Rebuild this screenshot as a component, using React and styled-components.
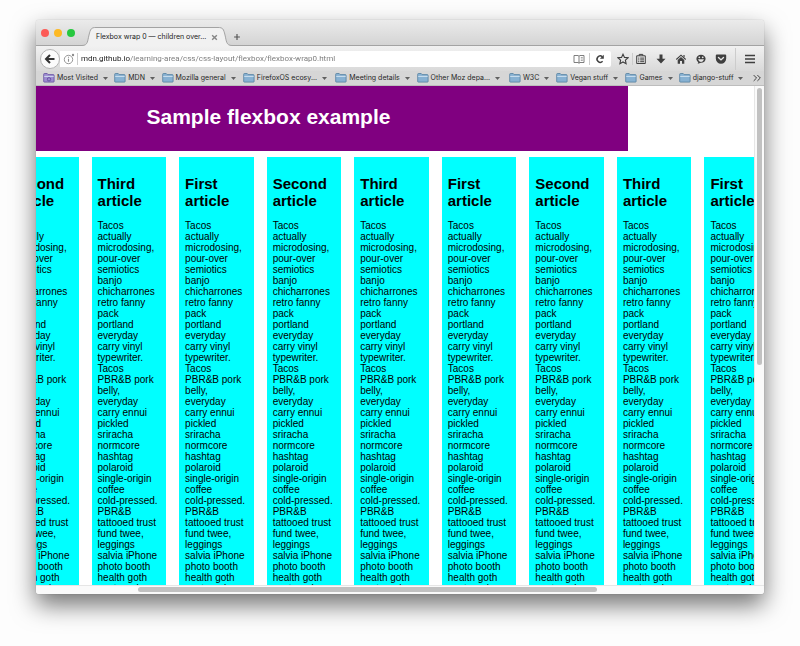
import React from "react";
import styled, { createGlobalStyle } from "styled-components";

const GlobalStyle = createGlobalStyle`
  * { box-sizing: border-box; }
  body { margin: 0; background: #fdfdfd; }
  button, input { font: inherit; color: inherit; }
`;

const UI_FONT = `Inter, Roboto, sans-serif`;
const ADDRESS_FONT = `Roboto, Inter, sans-serif`;
const PAGE_FONT = `"Liberation Sans", Arial, Helvetica, sans-serif`;

const Desktop = styled.div`
  height: 100vh;
  min-height: 320px;
  padding: 20px 36px 52px;
  display: flex;
  overflow: hidden;
`;

const BrowserWindow = styled.div`
  flex: 1;
  min-width: 0;
  display: flex;
  flex-direction: column;
  overflow: hidden;
  border-radius: 3px;
  background: #ffffff;
  font-family: ${UI_FONT};
  box-shadow: 0 0 1px rgba(0, 0, 0, 0.35), 0 11px 24px rgba(0, 0, 0, 0.55);
`;

const TitleBar = styled.div`
  height: 26px;
  flex: none;
  display: flex;
  align-items: flex-end;
  padding-left: 5px;
  background: linear-gradient(#ebebeb, #d3d3d3);
  box-shadow: inset 0 -1px 0 #a3a3a3;
`;

const WindowButtons = styled.div`
  display: flex;
  gap: 5px;
  align-self: center;
  margin-right: 7px;
`;

const WindowButton = styled.button`
  width: 8px;
  height: 8px;
  padding: 0;
  border: 0;
  border-radius: 50%;
  background: ${(p) => p.$color};
`;

const Tab = styled.div`
  height: 19px;
  display: flex;
  align-items: stretch;
`;

const TabEdge = styled.svg`
  display: block;
  width: 14px;
  height: 19px;
`;

const TabBody = styled.div`
  width: 122px;
  display: flex;
  align-items: center;
  justify-content: space-between;
  border-top: 1px solid #a3a3a3;
  background: #f1f1f1;
`;

const TabTitle = styled.span`
  font-size: 7px;
  line-height: 10px;
  white-space: nowrap;
  color: #222222;
`;

const IconButton = styled.button`
  flex: none;
  width: ${(p) => p.$w || 12}px;
  height: 12px;
  padding: 0;
  border: 0;
  background: none;
  display: flex;
  align-items: center;
  justify-content: center;
  color: ${(p) => p.$color || "#3f3f3f"};
`;

const NewTab = styled(IconButton)`
  margin-bottom: 3px;
`;

const Toolbar = styled.div`
  height: 25px;
  flex: none;
  display: flex;
  align-items: center;
  padding: 0 8px 0 4px;
  background: linear-gradient(#f1f1f1, #d9d9d9);
`;

const BackButton = styled.button`
  flex: none;
  width: 20px;
  height: 20px;
  padding: 0;
  border: 1px solid #b4b4b4;
  border-radius: 50%;
  background: #fbfbfb;
  color: #333333;
  display: flex;
  align-items: center;
  justify-content: center;
`;

const AddressBar = styled.div`
  flex: 1;
  min-width: 0;
  height: 16px;
  display: flex;
  align-items: center;
  background: #ffffff;
  border-radius: 0 2px 2px 0;
  padding: 0 5px 0 3px;
`;

const Separator = styled.span`
  flex: none;
  width: 1px;
  height: ${(p) => p.$h || 12}px;
  margin: 0 ${(p) => p.$gap || 2}px;
  background: #cccccc;
`;

const AddressInput = styled.input`
  flex: 1;
  min-width: 0;
  height: 14px;
  padding: 0 0 0 1px;
  border: 0;
  outline: 0;
  font-family: ${ADDRESS_FONT};
  font-size: 8px;
  color: #777777;
  background: linear-gradient(90deg, #1c1c1c 50px, #777777 50px);
  background-clip: text;
  -webkit-text-fill-color: transparent;
`;

const Tools = styled.div`
  flex: none;
  display: flex;
  align-items: center;
  padding-left: 5px;
`;

const ToolGroup = styled.div`
  display: flex;
  align-items: center;
  gap: 8px;
`;

const Bookmarks = styled.nav`
  height: 15px;
  flex: none;
  display: flex;
  align-items: center;
  padding: 0 2px 0 7px;
  background: #d6d6d6;
  border-bottom: 1px solid #bdbdbd;
`;

const Bookmark = styled.button`
  flex: ${(p) => p.$span} 1 0;
  min-width: 0;
  padding: 0;
  border: 0;
  background: none;
  display: flex;
  align-items: center;
  gap: 2px;
  font-size: 7px;
  line-height: 10px;
  white-space: nowrap;
  color: #262626;
`;

const FolderIcon = styled.svg`
  flex: none;
  width: 12px;
  height: 10px;
`;

const Caret = styled.svg`
  flex: none;
  width: 5px;
  height: 3px;
  margin-left: 3px;
  fill: #5f5f5f;
`;

const Content = styled.div`
  flex: 1;
  min-height: 0;
  display: grid;
  grid-template-columns: minmax(0, 1fr) 10px;
  grid-template-rows: minmax(0, 1fr) 9px;
`;

const Viewport = styled.main`
  overflow: hidden;
  background: #ffffff;
  font-family: ${PAGE_FONT};
  color: #000000;
`;

const PageHeader = styled.header`
  margin: 0 126px 0 -127px;
  padding: 18px 0 21px;
  background: #800080;
  text-align: center;
`;

const PageTitle = styled.h1`
  margin: 0;
  font-size: 21px;
  line-height: 26px;
  color: #ffffff;
`;

const Articles = styled.section`
  margin: 6px -25px 0 -32px;
  display: grid;
  grid-template-columns: repeat(9, minmax(0, 1fr));
  gap: 13px;
`;

const Article = styled.article`
  padding: 18px 0 20px 6px;
  background: #00ffff;
`;

const ArticleTitle = styled.h2`
  margin: 0 0 11px;
  font-size: 15px;
  line-height: 17px;
`;

const ArticleText = styled.p`
  margin: 0;
  font-size: 10px;
  line-height: 11px;
  white-space: pre;
`;

const VerticalBar = styled.div`
  padding: 2px 2px;
  border-left: 1px solid #e6e6e6;
  background: #fafafa;
`;

const HorizontalBar = styled.div`
  grid-column: 1 / -1;
  padding: 1px 0 2px;
  border-top: 1px solid #e6e6e6;
  background: #fafafa;
`;

const VerticalThumb = styled.div`
  width: 5px;
  height: 56%;
  border-radius: 3px;
  background: #c1c1c1;
`;

const HorizontalThumb = styled.div`
  width: 63%;
  height: 5px;
  margin-left: 14%;
  border-radius: 3px;
  background: #c1c1c1;
`;

const Glyph = ({ w = 12, h = 12, children }) => (
  <svg width={w} height={h} viewBox="0 0 12 12" fill="none" stroke="currentColor" strokeWidth="1.2" aria-hidden="true">
    {children}
  </svg>
);

const Folder = ({ special }) => {
  const fill = special ? "#9d8bd0" : "#87b1d2";
  const line = special ? "#6551a0" : "#54809f";
  return (
    <FolderIcon viewBox="0 0 12 10" aria-hidden="true">
      <path d="M.7 8.5V1.300q0-.8.800-.8h2.700l1 1.100h5.100q.8 0 .8.800v6.100q0 .6-.6.600h-9.200q-.6 0-.6-.6z" fill={fill} stroke={line} strokeWidth=".8" />
      <path d="M1.200 3.400h9.500" stroke="#d7e6f2" strokeWidth=".9" />
      {special && <circle cx="6" cy="6.300" r="1.700" fill="none" stroke="#5b4896" strokeWidth=".8" />}
    </FolderIcon>
  );
};

const bookmarks = [
  { label: "Most Visited", span: 71, special: true },
  { label: "MDN", span: 47 },
  { label: "Mozilla general", span: 81 },
  { label: "FirefoxOS ecosy...", span: 92 },
  { label: "Meeting details", span: 81 },
  { label: "Other Moz depa...", span: 92 },
  { label: "W3C", span: 47 },
  { label: "Vegan stuff", span: 69 },
  { label: "Games", span: 53 },
  { label: "django-stuff", span: 73 },
];

const articleTitles = ["Second", "Third", "First", "Second", "Third", "First", "Second", "Third", "First"];

const articleText = `Tacos
actually
microdosing,
pour-over
semiotics
banjo
chicharrones
retro fanny
pack
portland
everyday
carry vinyl
typewriter.
Tacos
PBR&B pork
belly,
everyday
carry ennui
pickled
sriracha
normcore
hashtag
polaroid
single-origin
coffee
cold-pressed.
PBR&B
tattooed trust
fund twee,
leggings
salvia iPhone
photo booth
health goth
gastropub
hammock.`;

export default function App() {
  return (
    <>
      <GlobalStyle />
      <Desktop>
        <BrowserWindow>
          <TitleBar>
            <WindowButtons>
              <WindowButton $color="#fc5b57" aria-label="Close window" />
              <WindowButton $color="#fdb924" aria-label="Minimize window" />
              <WindowButton $color="#27c83f" aria-label="Zoom window" />
            </WindowButtons>
            <Tab>
              <TabEdge viewBox="0 0 14 19" aria-hidden="true">
                <path d="M0 18.5C6 18.5 5.5 14 7 8S9 .5 14 .5V19H0z" fill="#f1f1f1" />
                <path d="M0 18.5C6 18.5 5.5 14 7 8S9 .5 14 .5" fill="none" stroke="#a3a3a3" />
              </TabEdge>
              <TabBody>
                <TabTitle>Flexbox wrap 0 — children over...</TabTitle>
                <IconButton $w={7} $color="#858585" aria-label="Close tab">
                  <Glyph w={7} h={7}><path d="M2 2l8 8M10 2l-8 8" strokeWidth="2.4" /></Glyph>
                </IconButton>
              </TabBody>
              <TabEdge viewBox="0 0 14 19" aria-hidden="true">
                <path d="M14 18.5C8 18.5 8.5 14 7 8S5 .5 0 .5V19H14z" fill="#f1f1f1" />
                <path d="M14 18.5C8 18.5 8.5 14 7 8S5 .5 0 .5" fill="none" stroke="#a3a3a3" />
              </TabEdge>
            </Tab>
            <NewTab aria-label="New tab" $w={10} $color="#555555">
              <Glyph><path d="M6 2.5v7M2.5 6h7" strokeWidth="1.4" /></Glyph>
            </NewTab>
          </TitleBar>

          <Toolbar>
            <BackButton aria-label="Back">
              <Glyph><path d="M10.5 6H2.5M6 2L2 6l4 4" strokeWidth="2" /></Glyph>
            </BackButton>
            <AddressBar>
              <IconButton $color="#8d8d8d" aria-label="Site information">
                <Glyph>
                  <circle cx="5.5" cy="6.5" r="4.2" strokeWidth=".9" />
                  <path d="M5.5 5.8v3M5.5 3.7v1" strokeWidth="1.1" />
                  <circle cx="10" cy="2" r="1.2" fill="currentColor" stroke="none" />
                </Glyph>
              </IconButton>
              <Separator />
              <AddressInput
                aria-label="Address"
                defaultValue="mdn.github.io/learning-area/css/css-layout/flexbox/flexbox-wrap0.html"
                spellCheck={false}
              />
              <IconButton $color="#707070" aria-label="Reader view">
                <Glyph>
                  <path d="M6 3.2L5 2.5H1v7h4l1 .7 1-.7h4v-7H7zM6 3.2v7" strokeWidth=".9" />
                  <path d="M7.8 4.5h2M7.8 6h2M7.8 7.5h2" strokeWidth=".6" />
                </Glyph>
              </IconButton>
              <Separator $gap={4} />
              <IconButton aria-label="Reload">
                <Glyph>
                  <path d="M8.6 8.3A3.2 3.2 0 1 1 8.3 3.6" strokeWidth="1.5" />
                  <path d="M9.8 1.8v4H5.9z" fill="currentColor" stroke="none" />
                </Glyph>
              </IconButton>
            </AddressBar>
            <Tools>
              <IconButton $w={14} aria-label="Bookmark this page">
                <Glyph><path d="M6 1.2l1.5 3.2 3.5.4-2.6 2.4.7 3.5L6 9 2.9 10.7l.7-3.5L1 4.8l3.5-.4z" strokeWidth="1.1" /></Glyph>
              </IconButton>
              <Separator />
              <ToolGroup>
                <IconButton aria-label="Show bookmarks">
                  <Glyph>
                    <path d="M1.7 2.8h8.6v7.7H1.7zM4.2 2.8V1.4h3.6v1.4M3.2 5.1h1.1M5.2 5.1h3.8M3.2 6.9h1.1M5.2 6.9h3.8M3.2 8.7h1.1M5.2 8.7h3.8" strokeWidth="1" />
                  </Glyph>
                </IconButton>
                <IconButton aria-label="Downloads">
                  <Glyph><path d="M4.5 1.5h3v4.300h3L6 10.500 1.500 5.800h3z" fill="currentColor" stroke="none" /></Glyph>
                </IconButton>
                <IconButton aria-label="Home">
                  <Glyph>
                    <path d="M1.300 6.500L6 2.200l4.700 4.300" strokeWidth="1.100" />
                    <path d="M2.700 7L6 4.100 9.300 7v3.800H7V8H5v2.800H2.700zM8.400 2h1.200v2.500L8.400 3.400z" fill="currentColor" stroke="none" />
                  </Glyph>
                </IconButton>
                <IconButton aria-label="Feedback">
                  <Glyph>
                    <path d="M6 1.7c2.700 0 4.600 1.700 4.600 4S8.700 9.800 6 9.800l-3.300.9.6-1.700C2 8.200 1.400 7 1.400 5.700c0-2.300 1.900-4 4.600-4z" fill="currentColor" stroke="none" />
                    <path d="M3 6.300h6Q8.300 8.900 6 8.900T3 6.300z" fill="#e6e6e6" stroke="none" />
                    <circle cx="4.300" cy="4.300" r=".9" fill="#e6e6e6" stroke="none" />
                    <circle cx="7.700" cy="4.300" r=".9" fill="#e6e6e6" stroke="none" />
                  </Glyph>
                </IconButton>
                <IconButton aria-label="Pocket">
                  <Glyph>
                    <path d="M1.800 1.500h8.400q1 0 1 1V5.500a5.200 5.200 0 0 1-10.400 0V2.500q0-1 1-1z" fill="currentColor" stroke="none" />
                    <path d="M3.500 4.500L6 6.900l2.500-2.400" stroke="#e6e6e6" strokeWidth="1.400" strokeLinecap="round" />
                  </Glyph>
                </IconButton>
              </ToolGroup>
              <Separator $h={22} $gap={8} />
              <IconButton aria-label="Menu">
                <Glyph><path d="M1 2.500h10M1 6h10M1 9.500h10" strokeWidth="1.600" /></Glyph>
              </IconButton>
            </Tools>
          </Toolbar>

          <Bookmarks aria-label="Bookmarks">
            {bookmarks.map((b) => (
              <Bookmark key={b.label} $span={b.span}>
                <Folder special={b.special} />
                <span>{b.label}</span>
                <Caret viewBox="0 0 5 3" aria-hidden="true"><path d="M0 0h5L2.500 3z" /></Caret>
              </Bookmark>
            ))}
            <IconButton $w={10} aria-label="More bookmarks">
              <Glyph w={10} h={10}><path d="M2 2.500L5.500 6 2 9.500M6.500 2.500L10 6l-3.500 3.500" /></Glyph>
            </IconButton>
          </Bookmarks>

          <Content>
            <Viewport>
              <PageHeader>
                <PageTitle>Sample flexbox example</PageTitle>
              </PageHeader>
              <Articles>
                {articleTitles.map((title, i) => (
                  <Article key={i}>
                    <ArticleTitle>{title}<br />article</ArticleTitle>
                    <ArticleText>{articleText}</ArticleText>
                  </Article>
                ))}
              </Articles>
            </Viewport>
            <VerticalBar><VerticalThumb /></VerticalBar>
            <HorizontalBar><HorizontalThumb /></HorizontalBar>
          </Content>
        </BrowserWindow>
      </Desktop>
    </>
  );
}
